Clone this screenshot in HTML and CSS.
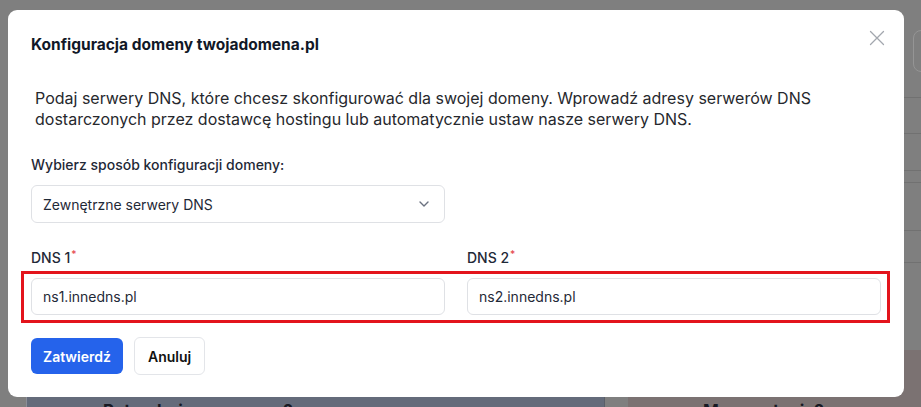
FILE: index.html
```html
<!DOCTYPE html>
<html lang="pl">
<head>
<meta charset="utf-8">
<title>Konfiguracja domeny</title>
<link rel="stylesheet" href="styles.css">
</head>
<body>
<div class="page">
  <div class="page-top">
    <aside class="side">
      <div class="side-btn"></div>
      <div class="side-rows">
        <div class="side-row h36"></div>
        <div class="side-row h37"></div>
        <div class="side-row h12"></div>
        <div class="side-row h48"></div>
        <div class="side-row h32"></div>
        <div class="side-row h20"></div>
      </div>
    </aside>
  </div>
  <div class="help">
    <section class="help-card help-card-blue"><h2 class="help-title">Potrzebujesz pomocy?</h2></section>
    <section class="help-card help-card-brown"><h2 class="help-title">Masz pytania?</h2></section>
  </div>
</div>

<div class="overlay">
  <div class="modal" role="dialog" aria-labelledby="modal-title">
    <div class="modal-header">
      <h1 class="modal-title" id="modal-title">Konfiguracja domeny twojadomena.pl</h1>
      <button class="close" type="button" aria-label="Zamknij">
        <svg width="16" height="16" viewBox="0 0 16 16"><path d="M1.5 1.5 L14.5 14.5 M14.5 1.5 L1.5 14.5" stroke="#a3a7ae" stroke-width="1.3" fill="none" stroke-linecap="round"/></svg>
      </button>
    </div>
    <p class="intro">Podaj serwery DNS, które chcesz skonfigurować dla swojej domeny. Wprowadź adresy serwerów DNS dostarczonych przez dostawcę hostingu lub automatycznie ustaw nasze serwery DNS.</p>
    <label class="field-label">Wybierz sposób konfiguracji domeny:</label>
    <div class="select">
      <span>Zewnętrzne serwery DNS</span>
      <svg width="10" height="6" viewBox="0 0 10 6"><path d="M1 1 L5 5 L9 1" stroke="#6b7280" stroke-width="1.4" fill="none" stroke-linecap="round" stroke-linejoin="round"/></svg>
    </div>
    <div class="dns-labels">
      <label class="dns-label">DNS 1<span class="req">*</span></label>
      <label class="dns-label">DNS 2<span class="req">*</span></label>
    </div>
    <div class="dns-inputs">
      <input class="text-input" type="text" value="ns1.innedns.pl">
      <input class="text-input" type="text" value="ns2.innedns.pl">
    </div>
    <div class="actions">
      <button class="btn btn-primary" type="button">Zatwierdź</button>
      <button class="btn btn-secondary" type="button">Anuluj</button>
    </div>
  </div>
</div>
</body>
</html>
```

FILE: styles.css
```css
* { box-sizing: border-box; }
html, body { margin: 0; height: 100%; }
body {
  background: #7f7f7f;
  font-family: Inter, "Noto Sans", "Liberation Sans", sans-serif;
  overflow: hidden;
}

/* backdrop page */
.page {
  height: 407px;
  display: grid;
  grid-template-rows: 350px 1fr;
}
.page-top {
  display: flex;
  justify-content: flex-end;
}
.side {
  width: 30px;
  padding-top: 30px;
  display: flex;
  flex-direction: column;
}
.side-btn {
  margin-left: 22px;
  width: 40px;
  height: 42px;
  border: 1px solid #959595;
  border-radius: 8px;
}
.side-rows { margin-top: 25px; display: flex; flex-direction: column; }
.side-row { border-top: 1px solid #717171; }
.h36 { height: 36px; }
.h37 { height: 37px; }
.h12 { height: 12px; }
.h48 { height: 48px; }
.h32 { height: 32px; }
.h20 { height: 20px; }

.help {
  display: grid;
  grid-template-columns: 579px 1fr;
  column-gap: 23px;
  padding-left: 26px;
}
.help-card { padding: 49px 0 0 76px; }
.help-card-blue { background: #646b7a; border-left: 1px solid #8b8e97; border-right: 1px solid #5a5f69; }
.help-card-brown { background: #7b7272; padding-left: 75px; }
.help-title {
  margin: 0;
  font-size: 17px;
  line-height: 24px;
  font-weight: 700;
  color: #171923;
}

/* modal */
.overlay {
  position: fixed;
  inset: 0;
  display: flex;
  align-items: flex-start;
  padding: 10px 0 0 8px;
}
.modal {
  width: 896px;
  background: #ffffff;
  border-radius: 9px;
  padding: 24px 23px 22px;
}
.modal-header {
  display: flex;
  justify-content: space-between;
  align-items: flex-start;
}
.modal-title {
  margin: 0;
  font-size: 15.5px;
  line-height: 22px;
  font-weight: 700;
  color: #111827;
}
.close {
  margin: -4px -4px 0 0;
  padding: 0;
  border: 0;
  background: none;
  width: 16px;
  height: 16px;
  cursor: pointer;
}
.close svg { display: block; }

.intro {
  margin: 32px 0 0;
  padding-left: 4px;
  font-size: 16px;
  line-height: 21px;
  color: #26282d;
}
.field-label {
  display: block;
  margin-top: 25px;
  font-size: 14px;
  line-height: 20px;
  font-weight: 500;
  color: #1f2937;
}
.select {
  margin-top: 10px;
  width: 414px;
  height: 38px;
  border: 1px solid #dfe1e5;
  border-radius: 6px;
  padding: 0 15px 0 11px;
  display: flex;
  align-items: center;
  justify-content: space-between;
  font-size: 14px;
  color: #1f2937;
}
.select svg { display: block; }

.dns-labels,
.dns-inputs {
  display: grid;
  grid-template-columns: 1fr 1fr;
  column-gap: 22px;
}
.dns-labels { margin-top: 25px; }
.dns-label {
  font-size: 14px;
  line-height: 20px;
  font-weight: 500;
  color: #1f2937;
}
.req {
  color: #e5484d;
  font-size: 10px;
  line-height: 0;
  vertical-align: 5px;
  margin-left: 1px;
}
.dns-inputs {
  margin-top: 10px;
  position: relative;
}
.dns-inputs::after {
  content: "";
  position: absolute;
  top: -7px;
  bottom: -8px;
  left: -10px;
  right: -9px;
  border: 3px solid #e3141c;
  pointer-events: none;
}
.text-input {
  width: 100%;
  height: 37px;
  border: 1px solid #dfe1e5;
  border-radius: 6px;
  padding: 0 11px;
  font-family: inherit;
  font-size: 14px;
  color: #1f2937;
  background: #fff;
  outline: none;
}

.actions {
  margin-top: 22px;
  display: flex;
  align-items: center;
  gap: 11px;
}
.btn {
  font-family: inherit;
  font-size: 14px;
  font-weight: 600;
  border-radius: 6px;
  cursor: pointer;
}
.btn-primary {
  height: 36px;
  padding: 0 12px;
  background: #2563eb;
  color: #ffffff;
  border: 0;
}
.btn-secondary {
  height: 38px;
  padding: 0 13px;
  background: #ffffff;
  color: #111111;
  border: 1px solid #e3e5e9;
}
```
